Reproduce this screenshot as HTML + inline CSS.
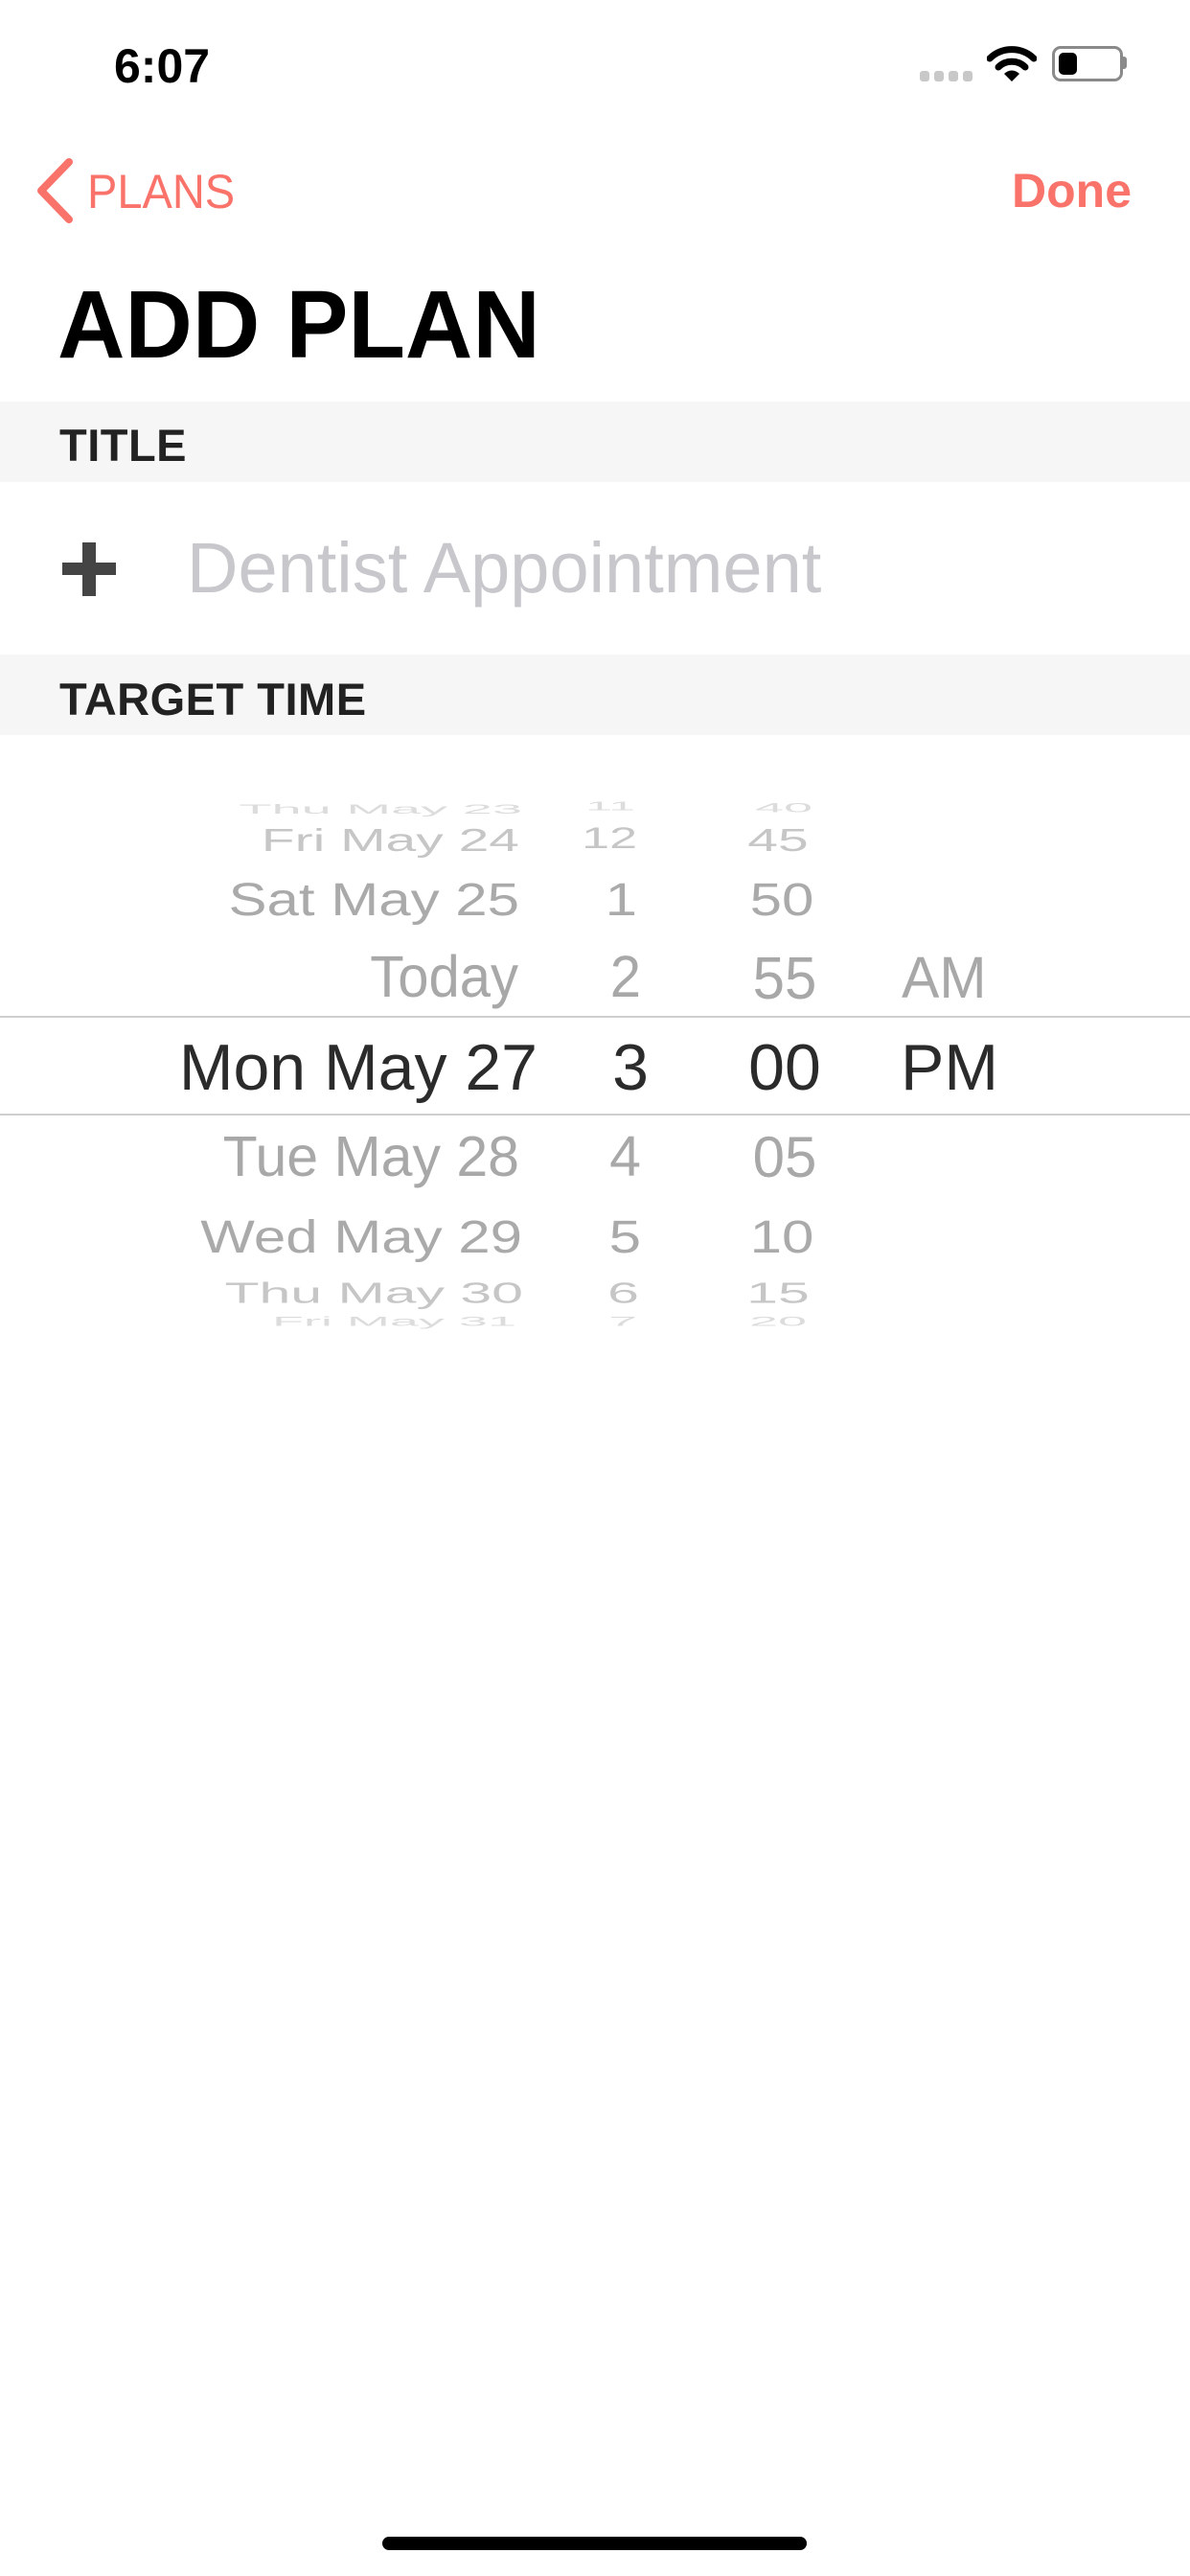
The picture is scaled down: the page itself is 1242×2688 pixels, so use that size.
<!DOCTYPE html>
<html><head><meta charset="utf-8"><style>
html,body{margin:0;padding:0;background:#fff;}
body{width:1242px;height:2688px;position:relative;overflow:hidden;font-family:"Liberation Sans",sans-serif;}
.a{position:absolute;white-space:nowrap;line-height:1;}
.r{text-align:right;}
.c{text-align:center;}
.band{position:absolute;left:0;width:1242px;background:#f6f6f6;}
.hdr{position:absolute;left:62px;font-size:47px;font-weight:bold;color:#222;line-height:1;letter-spacing:0.5px;}
.line{position:absolute;left:0;width:1242px;height:2px;background:#cfcfcf;}
</style></head><body>

<div class="a" style="left:119px;top:44px;font-size:50px;font-weight:bold;color:#000;">6:07</div>
<div style="position:absolute;left:960px;top:74px;width:10px;height:11px;border-radius:3px;background:#c8c8c8"></div>
<div style="position:absolute;left:975px;top:74px;width:10px;height:11px;border-radius:3px;background:#c8c8c8"></div>
<div style="position:absolute;left:990px;top:74px;width:10px;height:11px;border-radius:3px;background:#c8c8c8"></div>
<div style="position:absolute;left:1005px;top:74px;width:10px;height:11px;border-radius:3px;background:#c8c8c8"></div>
<svg style="position:absolute;left:1030px;top:46px" width="52" height="40" viewBox="0 0 52 40">
<path d="M3 15 A33 33 0 0 1 49 15" stroke="#000" stroke-width="7" fill="none" stroke-linecap="round"/>
<path d="M12 24 A20 20 0 0 1 40 24" stroke="#000" stroke-width="7" fill="none" stroke-linecap="round"/>
<path d="M18 31 L26 39 L34 31 A11 11 0 0 0 18 31 Z" fill="#000"/>
</svg>
<div style="position:absolute;left:1098px;top:48px;width:68px;height:31px;border:3px solid #8a8a8a;border-radius:9px;"></div>
<div style="position:absolute;left:1105px;top:55px;width:19px;height:23px;border-radius:5px;background:#000;"></div>
<div style="position:absolute;left:1171px;top:59px;width:5px;height:13px;border-radius:0 3px 3px 0;background:#8a8a8a;"></div>

<svg style="position:absolute;left:34px;top:163px" width="46" height="72" viewBox="0 0 46 72">
<path d="M38 6 L9 36 L38 66" stroke="#f9736a" stroke-width="8" fill="none" stroke-linecap="round" stroke-linejoin="round"/>
</svg>
<div class="a" style="left:91px;top:175px;font-size:50px;color:#f9736a;transform:scaleX(0.94);transform-origin:left;">PLANS</div>
<div class="a" style="left:1056px;top:174px;font-size:50px;font-weight:bold;color:#f9736a;">Done</div>

<div class="a" style="left:60px;top:289px;font-size:100px;font-weight:bold;color:#000;transform:scaleX(0.975);transform-origin:left;">ADD PLAN</div>

<div class="band" style="top:419px;height:84px;"></div>
<div class="hdr" style="top:441px;">TITLE</div>

<div style="position:absolute;left:65px;top:587px;width:56px;height:13px;background:#444;"></div>
<div style="position:absolute;left:86px;top:566px;width:14px;height:56px;background:#444;"></div>
<div class="a" style="left:195px;top:556px;font-size:74px;color:#c7c7cc;">Dentist Appointment</div>

<div class="band" style="top:683px;height:84px;"></div>
<div class="hdr" style="top:706px;">TARGET TIME</div>

<div class="line" style="top:1060px;"></div>
<div class="line" style="top:1162px;"></div>

<div class="a r" style="right:697px;top:816px;font-size:56px;color:#dcdcdc;transform:scaleY(0.25);">Thu May 23</div>
<div class="a r" style="right:700px;top:849px;font-size:57px;color:#c6c6c6;transform:scaleY(0.58);">Fri May 24</div>
<div class="a r" style="right:700px;top:909px;font-size:60px;color:#aaa;transform:scaleY(0.8);">Sat May 25</div>
<div class="a r" style="right:701px;top:991px;font-size:58px;color:#a8a8a8;transform:scaleY(1.06);">Today</div>
<div class="a r" style="right:681px;top:1080px;font-size:68px;color:#2b2b2b;">Mon May 27</div>
<div class="a r" style="right:700px;top:1178px;font-size:59px;color:#a8a8a8;">Tue May 28</div>
<div class="a r" style="right:697px;top:1261px;font-size:60px;color:#aaa;transform:scaleY(0.8);">Wed May 29</div>
<div class="a r" style="right:696px;top:1320px;font-size:59px;color:#c6c6c6;transform:scaleY(0.52);">Thu May 30</div>
<div class="a r" style="right:703px;top:1352px;font-size:54px;color:#dcdcdc;transform:scaleY(0.25);">Fri May 31</div>

<div class="a r" style="right:579px;top:816px;font-size:50px;color:#dcdcdc;transform:scaleY(0.25);">11</div>
<div class="a r" style="right:577px;top:849px;font-size:52px;color:#c6c6c6;transform:scaleY(0.6);">12</div>
<div class="a r" style="right:577px;top:909px;font-size:60px;color:#aaa;transform:scaleY(0.8);">1</div>
<div class="a r" style="right:573px;top:991px;font-size:58px;color:#a8a8a8;transform:scaleY(1.06);">2</div>
<div class="a r" style="right:565px;top:1080px;font-size:68px;color:#2b2b2b;">3</div>
<div class="a r" style="right:573px;top:1178px;font-size:59px;color:#a8a8a8;">4</div>
<div class="a r" style="right:573px;top:1261px;font-size:60px;color:#aaa;transform:scaleY(0.8);">5</div>
<div class="a r" style="right:575px;top:1320px;font-size:59px;color:#c6c6c6;transform:scaleY(0.52);">6</div>
<div class="a r" style="right:577px;top:1352px;font-size:54px;color:#dcdcdc;transform:scaleY(0.25);">7</div>

<div class="a c" style="left:718px;width:200px;top:816px;font-size:54px;color:#dcdcdc;transform:scaleY(0.25);">40</div>
<div class="a c" style="left:712px;width:200px;top:849px;font-size:57px;color:#c6c6c6;transform:scaleY(0.58);">45</div>
<div class="a c" style="left:716px;width:200px;top:909px;font-size:60px;color:#aaa;transform:scaleY(0.8);">50</div>
<div class="a c" style="left:719px;width:200px;top:991px;font-size:60px;color:#a8a8a8;transform:scaleY(1.04);">55</div>
<div class="a c" style="left:719px;width:200px;top:1080px;font-size:68px;color:#2b2b2b;">00</div>
<div class="a c" style="left:719px;width:200px;top:1178px;font-size:60px;color:#a8a8a8;">05</div>
<div class="a c" style="left:716px;width:200px;top:1261px;font-size:60px;color:#aaa;transform:scaleY(0.8);">10</div>
<div class="a c" style="left:712px;width:200px;top:1320px;font-size:59px;color:#c6c6c6;transform:scaleY(0.52);">15</div>
<div class="a c" style="left:712px;width:200px;top:1352px;font-size:54px;color:#dcdcdc;transform:scaleY(0.25);">20</div>

<div class="a" style="left:941px;top:991px;font-size:59px;color:#a8a8a8;transform:scaleY(1.04);">AM</div>
<div class="a" style="left:940px;top:1080px;font-size:68px;color:#2b2b2b;">PM</div>

<div style="position:absolute;left:399px;top:2647px;width:443px;height:14px;border-radius:7px;background:#000;"></div>
</body></html>
